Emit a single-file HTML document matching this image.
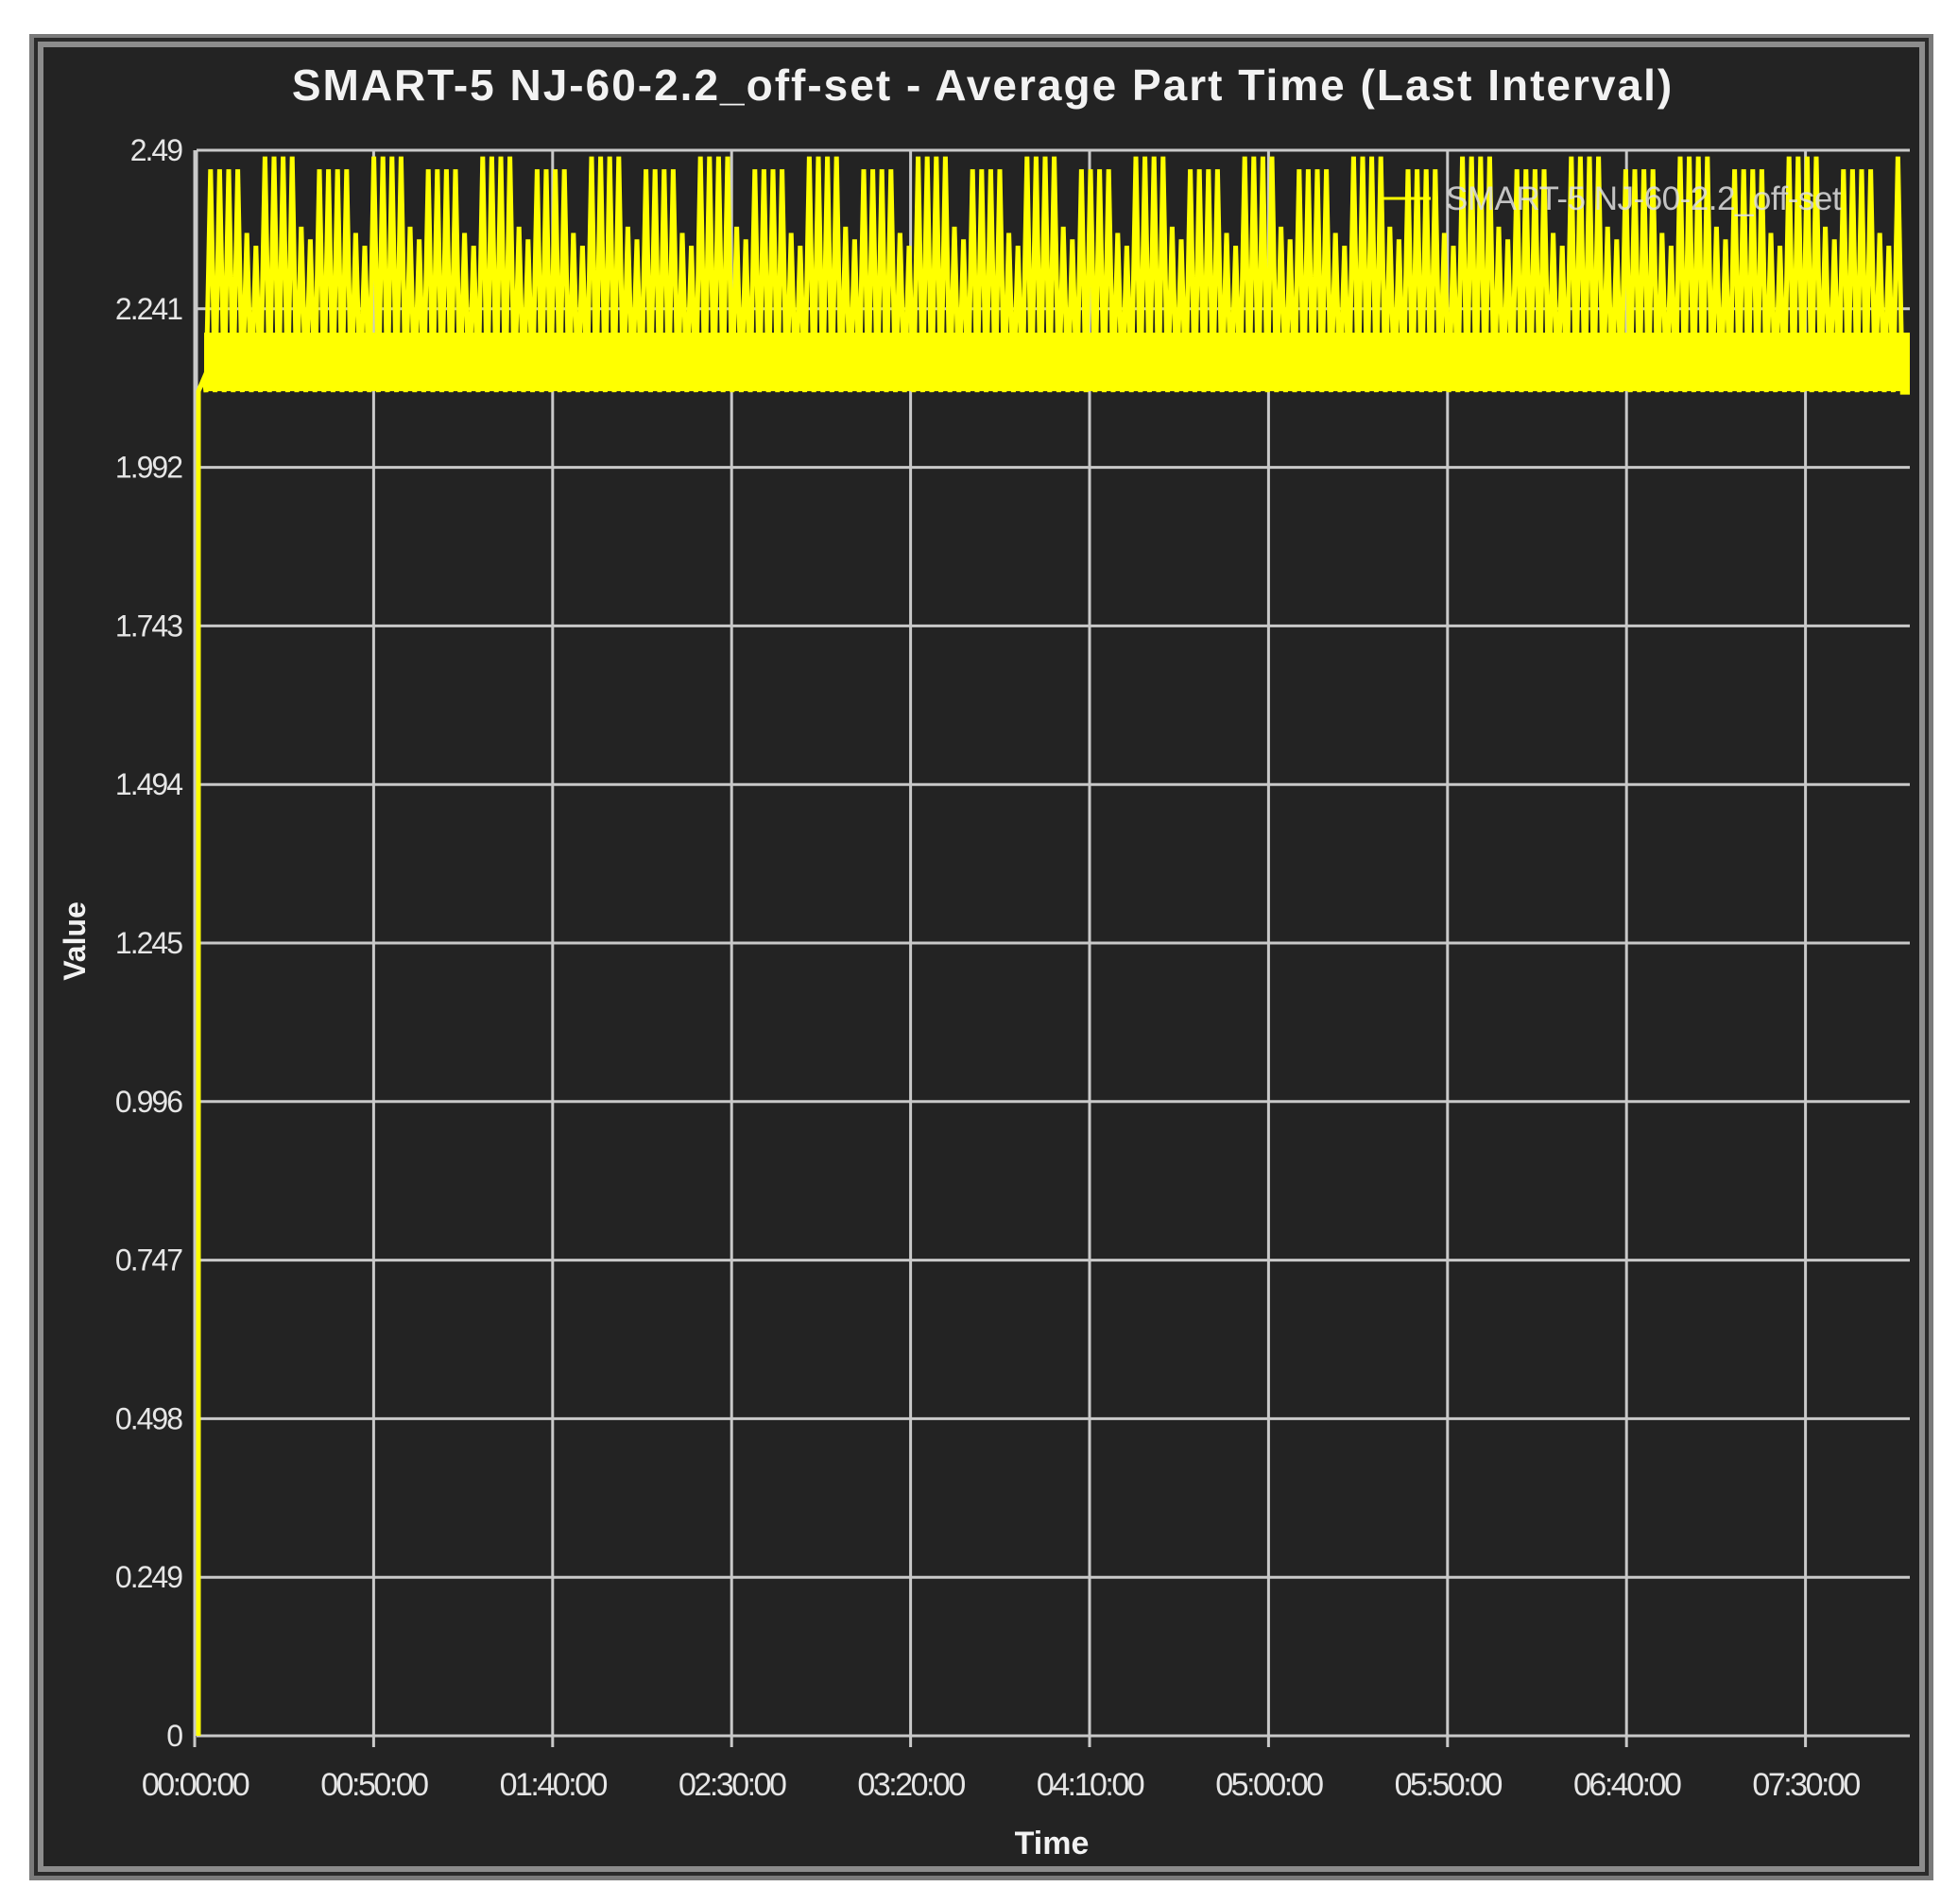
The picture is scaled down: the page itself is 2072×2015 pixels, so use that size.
<!DOCTYPE html>
<html><head><meta charset="utf-8"><style>
html,body{margin:0;padding:0;background:#fff;}
body{width:2072px;height:2015px;position:relative;overflow:hidden;font-family:"Liberation Sans",sans-serif;}
</style></head><body>
<svg width="2072" height="2015" viewBox="0 0 2072 2015" xmlns="http://www.w3.org/2000/svg" style="position:absolute;left:0;top:0">
<rect x="31" y="36" width="2015" height="1954" fill="#7a7a7a"/>
<rect x="36" y="40" width="2005" height="1945" fill="#2a2a2a"/>
<rect x="40" y="44" width="1997" height="1937" fill="#8c8c8c"/>
<rect x="46" y="50" width="1985" height="1925" fill="#232323"/>
<text x="1040" y="106" text-anchor="middle" fill="#f2f2f2" font-size="46" font-weight="bold" letter-spacing="2" font-family="Liberation Sans, sans-serif">SMART-5 NJ-60-2.2_off-set - Average Part Time (Last Interval)</text>
<g id="grid" stroke="#c9c9c9" stroke-width="3"></g>
<g id="ylab" fill="#e6e6e6" font-size="32" text-anchor="end" font-family="Liberation Sans, sans-serif" letter-spacing="-2"></g>
<g id="xlab" fill="#e6e6e6" font-size="34" text-anchor="middle" font-family="Liberation Sans, sans-serif" letter-spacing="-2.5"></g>
<rect x="216" y="352" width="1805" height="62" fill="#ffff00"/>
<polyline id="data" fill="none" stroke="#ffff00" stroke-width="5" stroke-linejoin="miter"/>
<line x1="1461" y1="210" x2="1514" y2="210" stroke="#ffff00" stroke-width="3"/>
<text x="1530" y="222" fill="#e0e0e0" font-size="35" font-family="Liberation Sans, sans-serif" opacity="0.85" letter-spacing="-0.5">SMART-5 NJ-60-2.2_off-set</text>
<text x="1113" y="1962" text-anchor="middle" fill="#f2f2f2" font-size="34" font-weight="bold" font-family="Liberation Sans, sans-serif">Time</text>
<text transform="translate(90,996) rotate(-90)" text-anchor="middle" fill="#f2f2f2" font-size="32" font-weight="bold" font-family="Liberation Sans, sans-serif">Value</text>
</svg>
<script>
var ns="http://www.w3.org/2000/svg";
var L=208,R=2021,T=159,B=1837;
var g=document.getElementById('grid'),yl=document.getElementById('ylab'),xl=document.getElementById('xlab');
function el(p,tag,a,t){var e=document.createElementNS(ns,tag);for(var k in a)e.setAttribute(k,a[k]);if(t)e.textContent=t;p.appendChild(e);}
var yv=["2.49","2.241","1.992","1.743","1.494","1.245","0.996","0.747","0.498","0.249","0"];
for(var i=0;i<11;i++){var y=T+i*(B-T)/10;el(g,'line',{x1:L,y1:y,x2:R,y2:y});el(yl,'text',{x:192,y:y+11},yv[i]);}
var xv=["00:00:00","00:50:00","01:40:00","02:30:00","03:20:00","04:10:00","05:00:00","05:50:00","06:40:00","07:30:00"];
for(var j=0;j<10;j++){var x=206+j*189.4;el(g,'line',{x1:x,y1:T,x2:x,y2:B+12});el(xl,'text',{x:x,y:1900},xv[j]);}
el(g,'line',{x1:L,y1:T,x2:L,y2:B});
function Y(v){return B-v/2.49*(B-T);}
var pts=[[210,B],[210,414],[216,400]];
var pat=[2.46,2.46,2.46,2.46,2.36,2.34,2.48,2.48,2.48,2.48,2.37,2.35];
var x=218,k=0,base=Y(2.11);
while(x<2012){var v=pat[k%pat.length];pts.push([x,base]);pts.push([x+4.8,Y(v)]);pts.push([x+9.6,base]);x+=9.6;k++;}
pts.push([2021,base]);
document.getElementById('data').setAttribute('points',pts.map(function(p){return p[0].toFixed(1)+','+p[1].toFixed(1)}).join(' '));
</script>
</body></html>
